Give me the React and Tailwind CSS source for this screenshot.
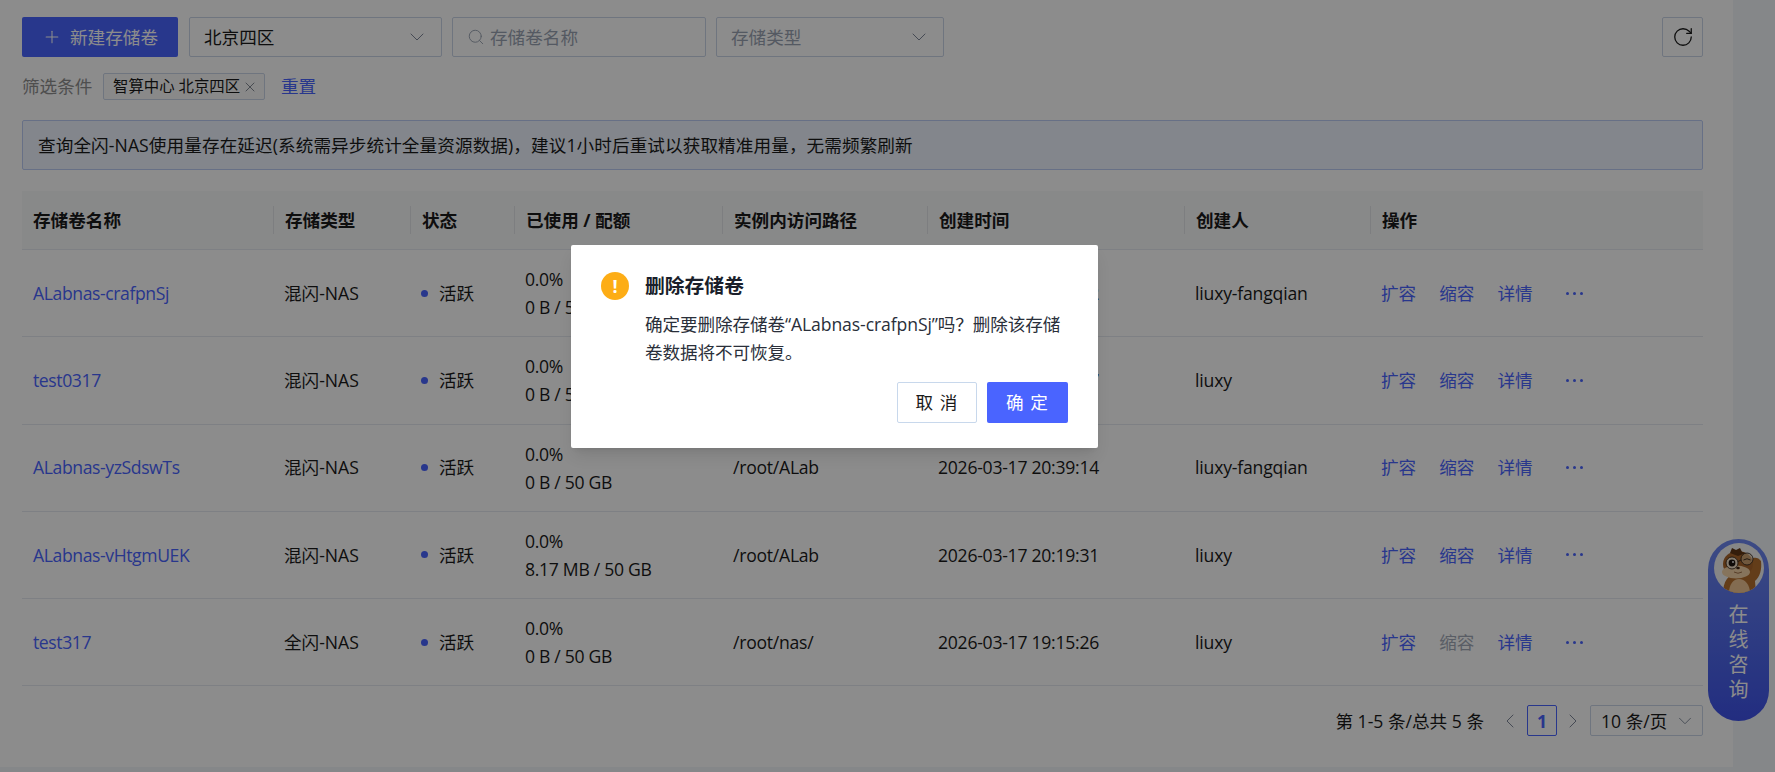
import { ChevronDown, ChevronLeft, ChevronRight, Plus, RotateCw, Search, X } from 'lucide-react'

const font = 'font-["Open_Sans","Noto_Sans_CJK_SC",sans-serif]'

const COLS = 'grid grid-cols-[251px_137px_104px_208px_205px_257px_186px_333px]'

const rows = [
  { name: 'ALabnas-crafpnSj', type: '混闪-NAS', used: '0 B / 50 GB', path: '/root/ALab', time: '2026-03-17 20:58:02', user: 'liuxy-fangqian' },
  { name: 'test0317', type: '混闪-NAS', used: '0 B / 50 GB', path: '/root/ALab', time: '2026-03-17 20:45:37', user: 'liuxy' },
  { name: 'ALabnas-yzSdswTs', type: '混闪-NAS', used: '0 B / 50 GB', path: '/root/ALab', time: '2026-03-17 20:39:14', user: 'liuxy-fangqian' },
  { name: 'ALabnas-vHtgmUEK', type: '混闪-NAS', used: '8.17 MB / 50 GB', path: '/root/ALab', time: '2026-03-17 20:19:31', user: 'liuxy' },
  { name: 'test317', type: '全闪-NAS', used: '0 B / 50 GB', path: '/root/nas/', time: '2026-03-17 19:15:26', user: 'liuxy', noShrink: true },
]

const headers = ['存储卷名称', '存储类型', '状态', '已使用 / 配额', '实例内访问路径', '创建时间', '创建人', '操作']

function Mascot() {
  return (
    <svg viewBox="0 0 50 50" className="h-[50px] w-[50px] rounded-full bg-[#f4f4f4]">
      <path d="M9 50c0-11 5-19 15-20l12-3 3-12c3-1 6 0 8 3 1 8-1 16-6 20l1 12z" fill="#b5702f" />
      <path d="M15 50c0-8 4-14 10-14s11 6 11 14z" fill="#eec594" />
      <ellipse cx="24" cy="21" rx="15" ry="13" fill="#a9652a" />
      <path d="M16 10l2-5 4 2 4-2 2 4 4 1-8 3z" fill="#5f3515" />
      <ellipse cx="22" cy="29" rx="14" ry="6.5" fill="#f5d3a8" />
      <circle cx="18" cy="20" r="6" fill="#f3e1c8" stroke="#2a211b" strokeWidth="0.8" />
      <circle cx="18" cy="20" r="3.4" fill="#1c1512" />
      <circle cx="19" cy="19" r="0.9" fill="#fff" />
      <circle cx="33" cy="16" r="6" fill="#e6c8a0" fillOpacity="0.6" stroke="#2a211b" strokeWidth="0.8" />
      <path d="M29.5 17q3.5-2.5 7 0" fill="none" stroke="#2a211b" strokeWidth="0.9" />
      <path d="M24 18.5l3-1.5" stroke="#2a211b" strokeWidth="0.8" />
      <ellipse cx="24" cy="25" rx="1.8" ry="1.2" fill="#3d2413" />
      <path d="M20 29q4 2.5 8 0" fill="none" stroke="#7a4a23" strokeWidth="0.7" />
    </svg>
  )
}

function SelectBox({ className, children, muted }) {
  return (
    <div className={`flex h-[40px] items-center justify-between rounded-[2px] border border-[#cbd5e8] pl-[14px] pr-[12px] text-[17.6px] ${muted ? 'text-[#9aa3b2]' : 'text-[#1a1a1a]'} ${className}`}>
      <span>{children}</span>
      <ChevronDown size={24} strokeWidth={1} className="text-[#7f8899]" />
    </div>
  )
}

export default function App() {
  return (
    <div className={`relative h-[772px] w-[1775px] overflow-hidden bg-[#f2f6fa] text-[#1a1a1a] ${font}`}>
      <div className="h-[767px] w-[1733px] bg-white pl-[22px] pr-[30px] pt-[17px]">
        {/* Toolbar */}
        <div className="flex items-center">
          <button className="flex h-[40px] w-[156px] items-center justify-center gap-[8px] rounded-[2px] bg-[#4a64ff] text-[17.6px] text-white">
            <Plus size={20} strokeWidth={1.25} />
            新建存储卷
          </button>
          <SelectBox className="ml-[11px] w-[253px]">北京四区</SelectBox>
          <div className="ml-[10px] flex h-[40px] w-[254px] items-center gap-[5px] rounded-[2px] border border-[#cbd5e8] pl-[14px] text-[17.6px] text-[#9aa3b2]">
            <Search size={18} strokeWidth={1.25} />
            存储卷名称
          </div>
          <SelectBox muted className="ml-[10px] w-[228px]">存储类型</SelectBox>
          <button className="ml-auto flex h-[40px] w-[41px] items-center justify-center rounded-[2px] border border-[#cbd5e8]">
            <RotateCw size={22} strokeWidth={1.4} />
          </button>
        </div>

        {/* Filter */}
        <div className="mt-[16px] flex h-[27px] items-center text-[17.6px]">
          <span className="w-[71px] whitespace-nowrap text-[#8f8f8f]">筛选条件</span>
          <div className="ml-[10px] flex h-[27px] w-[162px] items-center justify-between rounded-[2px] border border-[#cbd5e8] bg-[#fafafa] pl-[9px] pr-[6px] text-[15.4px]">
            智算中心 北京四区
            <X size={16} strokeWidth={1.25} className="text-[#6b7280]" />
          </div>
          <span className="ml-[16px] text-[#4a64ff]">重置</span>
        </div>

        {/* Notice */}
        <div className="mt-[20px] flex h-[50px] items-center rounded-[2px] border border-[#bccdf5] bg-[#eef4ff] pl-[15px] text-[17.6px] tracking-[0.1px]">
          查询全闪-NAS使用量存在延迟(系统需异步统计全量资源数据)，建议1小时后重试以获取精准用量，无需频繁刷新
        </div>

        {/* Table */}
        <div className={`mt-[21px] ${COLS} h-[59px] items-center border-b border-[#e6e9f0] bg-[#f8f9fa] text-[17.6px] font-bold`}>
          {headers.map((h, i) => (
            <div key={h} className={`flex h-[28px] items-center pl-[11px] ${i > 0 ? 'border-l border-[#e4e6ea]' : ''}`}>
              {h}
            </div>
          ))}
        </div>
        {rows.map((r) => (
          <div key={r.name} className={`${COLS} h-[87.25px] items-center border-b border-[#e6e9f0] text-[17.6px]`}>
            <div className="pl-[11px] tracking-[-0.4px] text-[#4a64ff]">{r.name}</div>
            <div className="pl-[11px]">{r.type}</div>
            <div className="flex items-center gap-[11px] pl-[11px]">
              <span className="h-[7px] w-[7px] rounded-full bg-[#4a64ff]" />
              活跃
            </div>
            <div className="pl-[11px] leading-[28px] tracking-[-0.3px]">
              <div>0.0%</div>
              <div>{r.used}</div>
            </div>
            <div className="pl-[11px] tracking-[-0.25px]">{r.path}</div>
            <div className="pl-[11px] tracking-[-0.26px]">{r.time}</div>
            <div className="pl-[11px] tracking-[-0.18px]">{r.user}</div>
            <div className="flex items-center gap-[23px] pl-[11px] text-[#4a64ff]">
              <span>扩容</span>
              <span className={r.noShrink ? 'text-[#a3aab8]' : ''}>缩容</span>
              <span>详情</span>
              <span className="ml-[10px] flex gap-[4px]">
                <i className="h-[3px] w-[3px] rounded-full bg-[#4a64ff]" />
                <i className="h-[3px] w-[3px] rounded-full bg-[#4a64ff]" />
                <i className="h-[3px] w-[3px] rounded-full bg-[#4a64ff]" />
              </span>
            </div>
          </div>
        ))}

        {/* Pagination */}
        <div className="mt-[19px] flex h-[31px] items-center justify-end text-[17.6px]">
          <span>第 1-5 条/总共 5 条</span>
          <ChevronLeft size={24} strokeWidth={1} className="ml-[14px] text-[#7f8899]" />
          <div className="ml-[5px] flex h-[31px] w-[30px] items-center justify-center rounded-[2px] border border-[#4a64ff] font-bold text-[#4a64ff]">1</div>
          <ChevronRight size={24} strokeWidth={1} className="ml-[4px] text-[#7f8899]" />
          <div className="ml-[5px] flex h-[31px] w-[113px] items-center justify-between rounded-[2px] border border-[#cbd5e8] pl-[10px] pr-[6px]">
            10 条/页
            <ChevronDown size={22} strokeWidth={1} className="text-[#7f8899]" />
          </div>
        </div>
      </div>

      {/* Consult widget */}
      <div className="absolute left-[1708px] top-[539px] flex h-[182px] w-[61px] flex-col items-center rounded-full bg-gradient-to-b from-[#6f88f0] to-[#3f52ea] pt-[4px]">
        <Mascot />
        <div className="mt-[9px] w-[20px] text-center text-[20px] leading-[25px] text-white">在线咨询</div>
      </div>

      {/* Mask */}
      <div className="absolute inset-0 bg-black/45" />

      {/* Dialog */}
      <div className="absolute left-[571px] top-[245px] h-[203px] w-[527px] rounded-[2px] bg-white pl-[30px] pr-[30px] pt-[27px] shadow-lg">
        <div className="flex items-start">
          <span className="flex h-[28px] w-[28px] shrink-0 items-center justify-center rounded-full bg-[#fdad16] text-[18px] font-bold leading-none text-white">!</span>
          <div className="ml-[16px]">
            <div className="text-[19.8px] font-bold leading-[28px] text-[#1a1f2b]">删除存储卷</div>
            <div className="mt-[10px] text-[17.6px] leading-[28px] tracking-[-0.1px] text-[#2a2f3a]">
              确定要删除存储卷“ALabnas-crafpnSj”吗？删除该存储卷数据将不可恢复。
            </div>
          </div>
        </div>
        <div className="mt-[16px] flex justify-end gap-[10px]">
          <button className="h-[41px] w-[80px] rounded-[2px] border border-[#c8d8ec] text-[17.6px] tracking-[1px]">取 消</button>
          <button className="h-[41px] w-[81px] rounded-[2px] bg-[#4a64ff] text-[17.6px] tracking-[1px] text-white">确 定</button>
        </div>
      </div>
    </div>
  )
}
